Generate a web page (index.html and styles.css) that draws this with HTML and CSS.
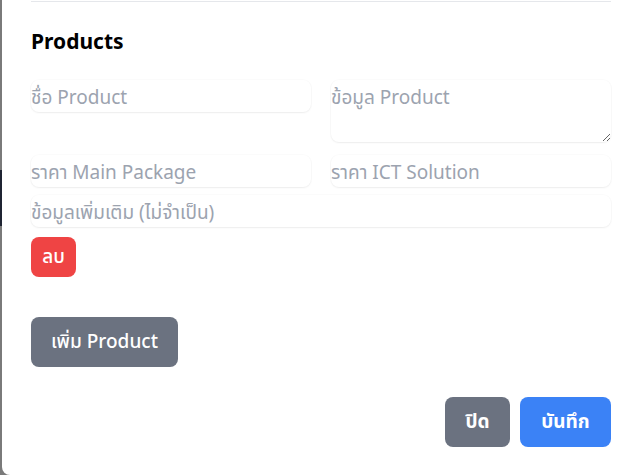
FILE: index.html
```html
<!DOCTYPE html>
<html lang="th">
<head>
<meta charset="utf-8">
<link rel="stylesheet" href="styles.css">
</head>
<body>
<div class="backdrop-edge"><span class="dark"></span></div>
<div class="modal">
  <div class="divider"></div>
  <h3 class="title">Products</h3>
  <div class="product">
    <div class="grid">
      <input class="field" placeholder="ชื่อ Product">
      <textarea class="field area" placeholder="ข้อมูล Product"></textarea>
      <input class="field" placeholder="ราคา Main Package">
      <input class="field" placeholder="ราคา ICT Solution">
    </div>
    <input class="field full" placeholder="ข้อมูลเพิ่มเติม (ไม่จำเป็น)">
    <button class="btn danger">ลบ</button>
  </div>
  <button class="btn gray add">เพิ่ม Product</button>
  <div class="footer">
    <button class="btn gray close">ปิด</button>
    <button class="btn primary">บันทึก</button>
  </div>
</div>
</body>
</html>
```
FILE: styles.css
```css
* { box-sizing: border-box; }
html, body { margin: 0; height: 100%; }
body {
  background: #7a7a7a;
  font-family: "Noto Sans", "Noto Sans Thai", "Open Sans", sans-serif;
  display: flex;
  overflow: hidden;
}
.backdrop-edge {
  width: 2px;
  flex: none;
  padding-top: 170px;
}
.backdrop-edge .dark {
  display: block;
  height: 56px;
  background: #1f2433;
}
.modal {
  flex: 1;
  height: 475px;
  background: #fff;
  border-bottom-left-radius: 8px;
  padding: 1px 25px 0 29px;
}
.divider {
  height: 1px;
  background: #e5e7eb;
}
.title {
  margin: 24px 0 0;
  font-size: 21px;
  line-height: 30px;
  font-weight: 700;
  color: #000;
}
.product { margin-top: 24px; }
.grid {
  display: grid;
  grid-template-columns: 1fr 1fr;
  column-gap: 20px;
  row-gap: 13px;
  align-items: start;
}
.field {
  display: block;
  width: 100%;
  height: 32px;
  border: none;
  border-radius: 8px;
  padding: 2px 0 0;
  margin: 0;
  font: inherit;
  font-size: 19px;
  color: #111827;
  background: #fff;
  box-shadow: 0 1px 2px rgba(0, 0, 0, 0.06), 0 0 0 1px rgba(0, 0, 0, 0.015);
  outline: none;
}
.field::placeholder { color: #9ca3af; }
.area {
  height: 62px;
  resize: vertical;
  line-height: 26px;
  padding-top: 4px;
}
.full { margin-top: 8px; }
.btn {
  display: block;
  border: none;
  border-radius: 8px;
  color: #fff;
  font: inherit;
  font-size: 19px;
  font-weight: 500;
  padding: 0;
  cursor: pointer;
}
.danger {
  margin-top: 10px;
  height: 40px;
  width: 45px;
  background: #ef4444;
}
.gray { background: #6b7280; }
.add {
  margin-top: 40px;
  height: 50px;
  width: 147px;
}
.footer {
  display: flex;
  justify-content: flex-end;
  gap: 10px;
  margin-top: 30px;
}
.close { width: 65px; height: 50px; font-weight: 700; }
.primary { width: 91px; height: 50px; background: #3b82f6; font-weight: 700; }
```
